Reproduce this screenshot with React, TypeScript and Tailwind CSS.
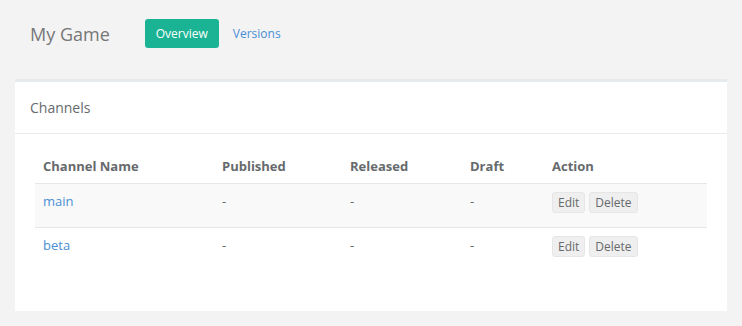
const channels = ["main", "beta"];

function RowButton({ label }: { label: string }) {
  return (
    <button className="h-[21px] px-[5px] rounded-[3px] border border-[#e6e6e6] bg-[#efefef] text-[12px] leading-[19px] text-[#676a6c]">
      {label}
    </button>
  );
}

export default function App() {
  return (
    <div
      className="min-h-[326px] bg-[#f3f3f4] px-[15px] pt-[19px] pb-[15px] text-[#676a6c]"
      style={{ fontFamily: '"Open Sans", "Liberation Sans", sans-serif' }}
    >
      {/* page header */}
      <div className="flex items-center h-[29px] pl-[15px]">
        <h1 className="text-[18px] leading-none text-[#777] mr-[35px]">My Game</h1>
        <a className="h-[29px] px-[11px] flex items-center rounded-[3px] bg-[#1ab394] text-white text-[12px]">
          Overview
        </a>
        <a className="ml-[14px] text-[12px] text-[#4a8fd4]">Versions</a>
      </div>

      {/* channels box */}
      <div className="mt-[31px] bg-white border-t-[3px] border-[#e7eaec]">
        <div className="h-[52px] flex items-center px-[15px] border-b border-[#e7eaec]">
          <h5 className="text-[14px] font-normal text-[#676a6c]">Channels</h5>
        </div>
        <div className="px-[20px] pt-[13px] pb-[40px]">
          <table className="w-full text-[13px] border-collapse">
            <thead>
              <tr className="border-b border-[#e7e7e7] text-left">
                <th className="w-[179px] px-[8px] h-[36px] pb-[6px] align-bottom font-bold">Channel Name</th>
                <th className="w-[128px] px-[8px] pb-[6px] align-bottom font-bold">Published</th>
                <th className="w-[120px] px-[8px] pb-[6px] align-bottom font-bold">Released</th>
                <th className="w-[82px] px-[8px] pb-[6px] align-bottom font-bold">Draft</th>
                <th className="px-[8px] pb-[6px] align-bottom font-bold">Action</th>
              </tr>
            </thead>
            <tbody>
              {channels.map((name, i) => (
                <tr
                  key={name}
                  className={
                    i === 0 ? "bg-[#f9f9f9] border-b border-[#e7e7e7]" : ""
                  }
                >
                  <td className="px-[8px] pt-[8px] h-[44px] align-top">
                    <a className="text-[#4a8fd4]">{name}</a>
                  </td>
                  <td className="px-[8px] pt-[8px] align-top">-</td>
                  <td className="px-[8px] pt-[8px] align-top">-</td>
                  <td className="px-[8px] pt-[8px] align-top">-</td>
                  <td className="px-[8px] pt-[8px] align-top">
                    <div className="flex gap-[4px]">
                      <RowButton label="Edit" />
                      <RowButton label="Delete" />
                    </div>
                  </td>
                </tr>
              ))}
            </tbody>
          </table>
        </div>
      </div>
    </div>
  );
}
